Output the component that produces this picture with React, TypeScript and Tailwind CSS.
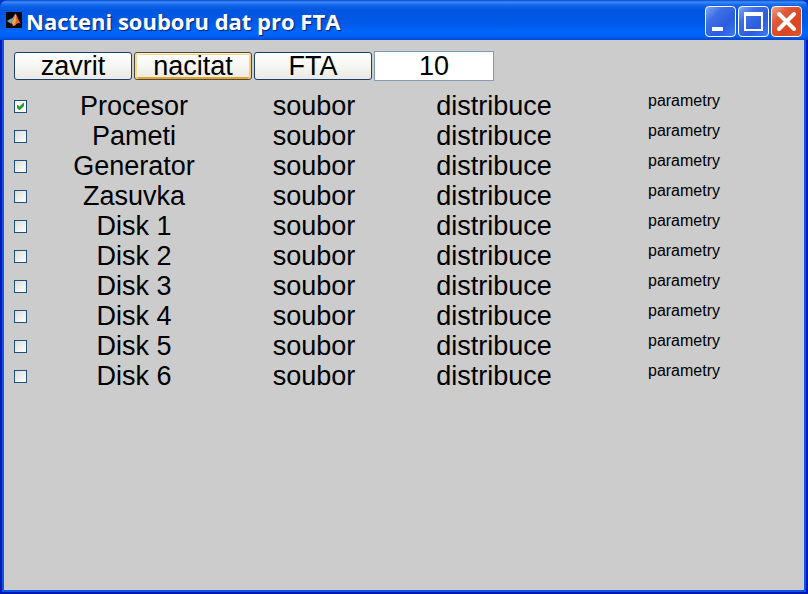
import { useState } from "react";

const NAMES = ["Procesor", "Pameti", "Generator", "Zasuvka", "Disk 1", "Disk 2", "Disk 3", "Disk 4", "Disk 5", "Disk 6"];

const CAPTION_BUTTON = "flex h-[31px] w-[31px] items-center justify-center rounded-[4px] border border-white";
const BLUE = "bg-[linear-gradient(135deg,#7fa5f5_0,#3f6fe6_30%,#2a5cdf_65%,#3f7af6_100%)]";
const RED = "bg-[linear-gradient(135deg,#f0a088_0,#e2593a_30%,#d94620_65%,#e0552a_100%)]";
const BUTTON = "flex h-7 w-[118px] items-center justify-center rounded-[3px] border bg-linear-to-b from-white via-[#f6f6f2] to-[#ebe9e2] text-[27px] leading-7 text-black";

function MatlabIcon() {
  return (
    <svg width="16" height="16" viewBox="0 0 16 16" aria-hidden="true">
      <rect width="16" height="16" fill="#090608" />
      <path d="M1 9 L5 6.500 L7.500 9 L4.500 11.500 Z" fill="#5cabc8" />
      <path d="M5 7 L7 5.500 L9 2 L8.500 7 L7 9.500 Z" fill="#8d9fb0" />
      <path d="M9.500 1.500 C11 3 12 8 15 12 C13 10.500 12 10.500 10.500 12 C9 14 8 14 7 14 C6.500 12 5.500 11 4 11 C7 10 8 6 9.500 1.500 Z" fill="#e0682a" />
      <path d="M9.500 1.500 C10.300 4 10.500 8 9 12 L7.500 13.500 C7 12 6.500 11 5.500 10.700 C8 9 8.500 5 9.500 1.500 Z" fill="#f5a755" />
    </svg>
  );
}

function TitleBar() {
  return (
    <header className="flex h-10 items-center gap-1 rounded-t-[8px] bg-[linear-gradient(180deg,#0a47c8_0,#3b8cf8_2px,#1467ec_5px,#0056e0_10px,#0058e6_22px,#0066fc_32px,#0064fa_36px,#0048cc_40px)] pr-1.5 pl-1.5">
      <MatlabIcon />
      <h1 className="flex-1 pt-0.5 font-['Open_Sans',sans-serif] text-[22px] leading-7 font-bold text-white [text-shadow:1px_1px_1px_#0a1f70]">
        Nacteni souboru dat pro FTA
      </h1>
      <div className="flex gap-0.5 pt-[3px]">
        <button type="button" aria-label="Minimalizovat" className={`${CAPTION_BUTTON} ${BLUE}`}>
          <svg width="29" height="29" viewBox="0 0 29 29">
            <path d="M6 20h11v4H6z" fill="#fff" />
          </svg>
        </button>
        <button type="button" aria-label="Maximalizovat" className={`${CAPTION_BUTTON} ${BLUE}`}>
          <svg width="29" height="29" viewBox="0 0 29 29">
            <path d="M5 5h19v19H5zM7 9v13h15V9z" fill="#fff" fillRule="evenodd" />
          </svg>
        </button>
        <button type="button" aria-label="Zavrit okno" className={`${CAPTION_BUTTON} ${RED}`}>
          <svg width="29" height="29" viewBox="0 0 29 29" fill="none">
            <path d="M7 7l15 15M22 7L7 22" stroke="#fff" strokeWidth="4" strokeLinecap="round" />
          </svg>
        </button>
      </div>
    </header>
  );
}

export default function App() {
  const [checked, setChecked] = useState<string[]>(["Procesor"]);
  const [count, setCount] = useState("10");

  const toggle = (name: string) => {
    setChecked((prev) => (prev.includes(name) ? prev.filter((n) => n !== name) : [...prev, name]));
  };

  return (
    <div className="flex min-h-screen flex-col bg-[#0034c8] font-['Liberation_Sans',Arial,sans-serif] text-black">
      <TitleBar />
      <div className="flex flex-1 border-x-2 border-b-2 border-[#0019b4]">
        <main className="flex-1 border-x-2 border-b-2 border-[#0f52ea] bg-[#cccccc] pt-[11px] pr-5 pb-4 pl-2.5">
          <div className="flex items-center gap-0.5">
            <button type="button" className={`${BUTTON} border-[#1c3f6e]`}>zavrit</button>
            <button type="button" className={`${BUTTON} border-[#4a4a45] shadow-[inset_0_1px_0_#fff0cf,inset_0_2px_0_#fdd889,inset_2px_0_0_#fbd98f,inset_-2px_0_0_#fbd07c,inset_0_-2px_0_#e5a52c]`}>
              nacitat
            </button>
            <button type="button" className={`${BUTTON} border-[#1c3f6e]`}>FTA</button>
            <input
              type="text"
              aria-label="Pocet"
              value={count}
              onChange={(e) => setCount(e.target.value)}
              className="h-[30px] w-[120px] border border-[#7f9db9] bg-white text-center text-[27px] leading-7 outline-none"
            />
          </div>

          <table className="mt-2.5 w-full table-fixed border-collapse text-center text-[27px] leading-[30px]">
            <colgroup>
              <col className="w-[30px]" />
              <col className="w-[180px]" />
              <col className="w-[180px]" />
              <col className="w-[180px]" />
              <col />
            </colgroup>
            <tbody>
              {NAMES.map((name, i) => (
                <tr key={name} className="h-[30px]">
                  <td className="p-0">
                    <div className="grid w-[13px]">
                      <input
                        id={`row-${i}`}
                        type="checkbox"
                        checked={checked.includes(name)}
                        onChange={() => toggle(name)}
                        className="peer col-start-1 row-start-1 h-[13px] w-[13px] appearance-none border border-[#1c5180] bg-linear-to-br from-[#dcdcd7] to-white checked:from-[#f4f4f2]"
                      />
                      <svg
                        width="13"
                        height="13"
                        viewBox="0 0 13 13"
                        aria-hidden="true"
                        className="pointer-events-none invisible col-start-1 row-start-1 peer-checked:visible"
                      >
                        <path d="M3 5v3l2 2h1l4-4V3H9L5.500 6.500L4 5z" fill="#2f9a2f" />
                      </svg>
                    </div>
                  </td>
                  <td className="p-0">
                    <label htmlFor={`row-${i}`}>{name}</label>
                  </td>
                  <td className="p-0">soubor</td>
                  <td className="p-0">distribuce</td>
                  <td className="p-0 align-top text-base leading-5">parametry</td>
                </tr>
              ))}
            </tbody>
          </table>
        </main>
      </div>
    </div>
  );
}
